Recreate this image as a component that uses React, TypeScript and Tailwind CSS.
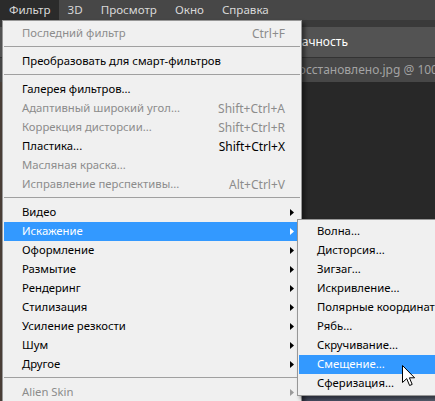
import clsx from "clsx";

type Entry =
    | { sep: true }
    | {
          label: string;
          shortcut?: string;
          disabled?: boolean;
          active?: boolean;
          sub?: boolean;
      };

const topMenu = ["Фильтр", "3D", "Просмотр", "Окно", "Справка"];

const filterItems: Entry[] = [
    { label: "Последний фильтр", shortcut: "Ctrl+F", disabled: true },
    { sep: true },
    { label: "Преобразовать для смарт-фильтров" },
    { sep: true },
    { label: "Галерея фильтров..." },
    { label: "Адаптивный широкий угол...", shortcut: "Shift+Ctrl+A", disabled: true },
    { label: "Коррекция дисторсии...", shortcut: "Shift+Ctrl+R", disabled: true },
    { label: "Пластика...", shortcut: "Shift+Ctrl+X" },
    { label: "Масляная краска...", disabled: true },
    { label: "Исправление перспективы...", shortcut: "Alt+Ctrl+V", disabled: true },
    { sep: true },
    { label: "Видео", sub: true },
    { label: "Искажение", sub: true, active: true },
    { label: "Оформление", sub: true },
    { label: "Размытие", sub: true },
    { label: "Рендеринг", sub: true },
    { label: "Стилизация", sub: true },
    { label: "Усиление резкости", sub: true },
    { label: "Шум", sub: true },
    { label: "Другое", sub: true },
    { sep: true },
    { label: "Alien Skin", sub: true, disabled: true },
];

const distortItems: Entry[] = [
    { label: "Волна..." },
    { label: "Дисторсия..." },
    { label: "Зигзаг..." },
    { label: "Искривление..." },
    { label: "Полярные координаты..." },
    { label: "Рябь..." },
    { label: "Скручивание..." },
    { label: "Смещение...", active: true },
    { label: "Сферизация..." },
];

function Arrow({ color }: { color: string }) {
    return (
        <svg width="4" height="7" viewBox="0 0 4 7">
            <path d="M0 0 L4 3.5 L0 7 Z" fill={color} />
        </svg>
    );
}

function MenuRow({ entry, wide }: { entry: Entry; wide?: boolean }) {
    if ("sep" in entry) {
        return <div className="mt-[3px] mb-[5px] h-px bg-[#a0a0a0] mx-[1px]" />;
    }
    const arrowColor = entry.active ? "#ffffff" : entry.disabled ? "#9a9a9a" : "#000000";
    return (
        <div
            className={clsx(
                "h-[19px] flex items-center ml-[1px] mr-[3px] pl-[18px] pr-[4px] whitespace-nowrap",
                entry.active
                    ? "bg-[#3399ff] text-white"
                    : entry.disabled
                      ? "text-[#8c8c8c]"
                      : "text-black"
            )}
        >
            <span className="flex-1 text-[11.3px]">{entry.label}</span>
            {entry.shortcut && <span>{entry.shortcut}</span>}
            {wide && (
                <span className="w-[9px] flex justify-end">
                    {entry.sub && <Arrow color={arrowColor} />}
                </span>
            )}
        </div>
    );
}

function Cursor() {
    return (
        <svg width="14" height="22" viewBox="0 0 14 22" className="absolute left-[402px] top-[365px]">
            <path
                d="M0.5 0.5 L0.5 17.5 L4.7 13.6 L7.6 20.5 L10.2 19.4 L7.4 12.8 L12.6 12.8 Z"
                fill="#ffffff"
                stroke="#000000"
                strokeWidth="1"
                strokeLinejoin="round"
            />
        </svg>
    );
}

export default function App() {
    return (
        <div
            className="relative w-[435px] h-[401px] overflow-hidden bg-[#282828] text-[12px]"
            style={{ fontFamily: '"Noto Sans", "Open Sans", sans-serif' }}
        >
            {/* menu bar */}
            <div className="h-[20px] bg-[#474747] flex items-center text-[11.6px] text-[#d8d8d8]">
                {topMenu.map((name, i) => (
                    <div
                        key={name}
                        className={clsx(
                            "h-full flex items-center",
                            i === 0 ? "bg-[#2b2b2b] pl-[9px] pr-[8px]" : "px-[9px]"
                        )}
                    >
                        {name}
                    </div>
                ))}
            </div>

            {/* options bar */}
            <div className="h-[7px] bg-[#3a3a3a]" />
            <div className="h-[31px] bg-[#535353] border-b border-[#333333] flex items-center">
                <div className="w-[348px] flex justify-end text-white">Непрозрачность</div>
            </div>

            {/* document tabs */}
            <div className="h-[24px] bg-[#474747] flex items-center text-[#a3a3a3] whitespace-nowrap">
                <span className="ml-[292px]">восстановлено.jpg @ 100% (RGB/8)</span>
            </div>

            {/* canvas with the left panel strip */}
            <div className="flex h-[319px]">
                <div className="w-[2px] bg-[#4a3f38]" />
                <div className="flex-1 flex flex-col justify-end">
                    <div className="h-[8px] bg-gradient-to-r from-[#2a2a3e] via-[#3b3f58] to-[#5a6272]" />
                </div>
            </div>

            {/* Filter menu */}
            <div className="absolute left-[2px] top-[20px] w-[300px] bg-[#f0f0f0] border border-[#979797] pt-[3px] pb-[3px] shadow-[3px_3px_4px_rgba(0,0,0,0.45)]">
                {filterItems.map((entry, i) => (
                    <MenuRow key={i} entry={entry} wide />
                ))}
            </div>

            {/* Distortion submenu */}
            <div className="absolute left-[297px] top-[219px] w-[170px] bg-[#f0f0f0] border border-[#979797] pt-[2px] pb-[2px] shadow-[3px_3px_4px_rgba(0,0,0,0.45)]">
                {distortItems.map((entry, i) => (
                    <MenuRow key={i} entry={entry} />
                ))}
            </div>

            <Cursor />
        </div>
    );
}
